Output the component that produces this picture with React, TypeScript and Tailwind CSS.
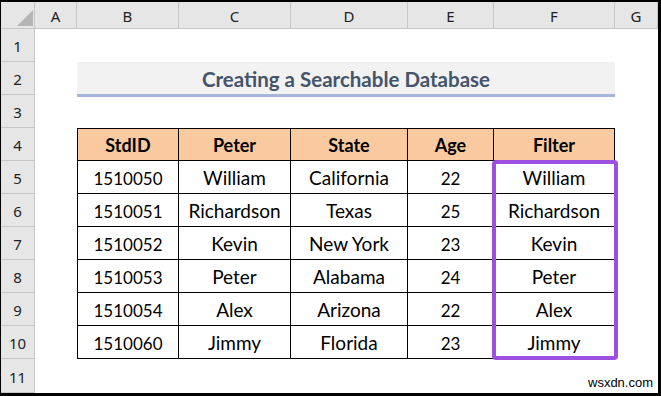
import React from "react";

const cols = ["A", "B", "C", "D", "E", "F", "G"];
const headers = ["StdID", "Peter", "State", "Age", "Filter"];
const rows = [
  ["1510050", "William", "California", "22", "William"],
  ["1510051", "Richardson", "Texas", "25", "Richardson"],
  ["1510052", "Kevin", "New York", "23", "Kevin"],
  ["1510053", "Peter", "Alabama", "24", "Peter"],
  ["1510054", "Alex", "Arizona", "22", "Alex"],
  ["1510060", "Jimmy", "Florida", "23", "Jimmy"],
];

const hdrFont = { fontFamily: '"Noto Sans", "Liberation Sans", sans-serif' };
const cellFont = { fontFamily: 'Lato, "Open Sans", sans-serif' };

export default function App() {
  return (
    <div className="w-[661px] h-[396px] bg-black overflow-hidden">
      <div className="ml-px mt-[2px] w-[657px] h-[391px] bg-white relative overflow-hidden">
        <div className="grid grid-cols-[34px_42px_102px_112px_117px_86px_121px_43px] grid-rows-[27px_repeat(10,33px)_34px]">
          {/* corner */}
          <div className="bg-[#e6e6e6] border-r border-b border-[#c6c6c6] relative">
            <svg className="absolute left-[16px] top-[8px]" width="16" height="16" viewBox="0 0 16 16">
              <polygon points="16,0 16,16 0,16" fill="#b5b5b5" />
            </svg>
          </div>
          {cols.map((c) => (
            <div
              key={c}
              style={hdrFont}
              className="bg-[#e6e6e6] border-r border-b border-[#c6c6c6] flex items-center justify-center text-[15px] text-[#222] pt-[2px]"
            >
              {c}
            </div>
          ))}

          {Array.from({ length: 11 }).map((_, ri) => {
            const r = ri + 1;
            const cells: React.ReactNode[] = [];
            cells.push(
              <div
                key={`rh${r}`}
                style={hdrFont}
                className="bg-[#e6e6e6] border-r border-b border-[#c6c6c6] flex items-center justify-center text-[15px] text-[#222] pt-[3px]"
              >
                {r}
              </div>
            );
            cells.push(<div key={`a${r}`} />);
            if (r === 2) {
              cells.push(
                <div key="title" className="col-span-5 relative">
                  <div
                    style={cellFont}
                    className="h-[35px] bg-[#f2f2f2] border-b-[3px] border-[#a5b6da] flex items-center justify-center text-[20.5px] font-bold text-[#44546a] pt-[2px]"
                  >
                    Creating a Searchable Database
                  </div>
                </div>
              );
            } else if (r === 4) {
              headers.forEach((h, i) => {
                cells.push(
                  <div
                    key={`h${i}`}
                    style={cellFont}
                    className={`bg-[#f9ca9f] border-t border-r border-b border-black flex items-center justify-center text-[18px] font-bold text-black pt-[2px] ${i === 0 ? "border-l" : ""}`}
                  >
                    {h}
                  </div>
                );
              });
            } else if (r >= 5 && r <= 10) {
              rows[r - 5].forEach((v, i) => {
                const numeric = i === 0 || i === 3;
                cells.push(
                  <div
                    key={`c${r}${i}`}
                    style={cellFont}
                    className={`border-r border-b border-black flex items-center justify-center text-black pt-[3px] ${numeric ? "text-[17px]" : "text-[19px]"} ${i === 0 ? "border-l" : ""}`}
                  >
                    {v}
                  </div>
                );
              });
            } else {
              for (let i = 0; i < 5; i++) cells.push(<div key={`e${r}${i}`} />);
            }
            cells.push(<div key={`g${r}`} />);
            return cells;
          })}
        </div>

        {/* purple highlight box */}
        <div className="absolute left-[491px] top-[158px] w-[126px] h-[200px] border-4 border-[#9d4fe0] rounded-[4px]" />

        {/* watermark */}
        <div
          className="absolute left-[587px] top-[371px] text-[13px] text-black"
          style={{ fontFamily: '"Liberation Sans", Arial, sans-serif' }}
        >
          wsxdn.com
        </div>
      </div>
    </div>
  );
}
